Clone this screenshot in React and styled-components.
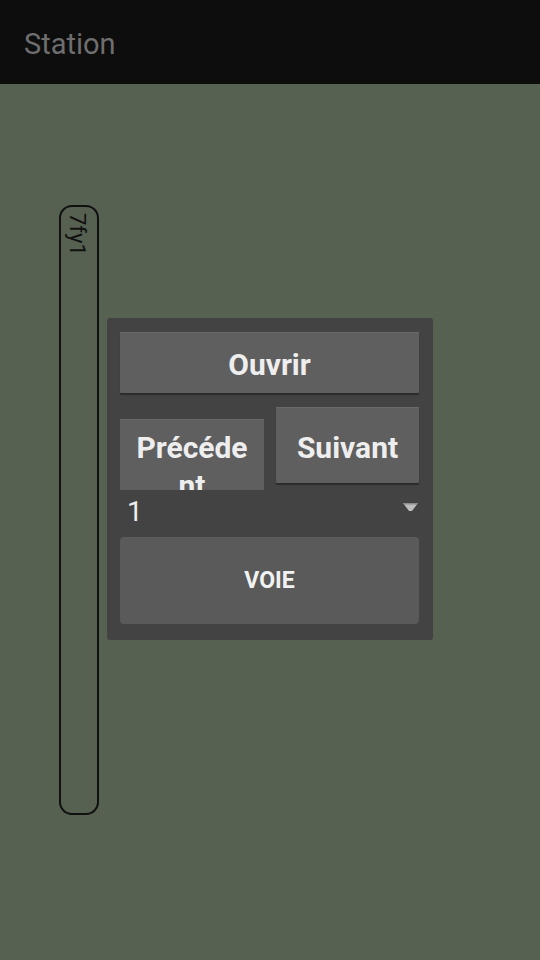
import styled, { createGlobalStyle } from 'styled-components';

const Global = createGlobalStyle`
  html, body {
    margin: 0;
    padding: 0;
    background: #566152;
    font-family: Roboto, "Liberation Sans", sans-serif;
  }
  * { box-sizing: border-box; }
`;

const Screen = styled.div`
  width: 540px;
  height: 960px;
  display: flex;
  flex-direction: column;
  background: #566152;
  overflow: hidden;
`;

const TopBar = styled.header`
  height: 84px;
  flex-shrink: 0;
  background: #0d0d0d;
  display: flex;
  align-items: center;
  padding: 3px 24px 0;
`;

const Title = styled.h1`
  margin: 0;
  font-size: 29px;
  font-weight: 400;
  color: #6e6e6e;
`;

const Canvas = styled.main`
  flex: 1;
  display: flex;
  align-items: flex-start;
  gap: 8px;
  padding-left: 59px;
`;

const Track = styled.div`
  margin-top: 121px;
  width: 40px;
  height: 610px;
  border: 2px solid #111;
  border-radius: 13px;
  display: flex;
  justify-content: center;
  padding-top: 6px;
  padding-right: 5px;
`;

const TrackLabel = styled.span`
  writing-mode: vertical-rl;
  font-size: 22px;
  color: #111;
  line-height: 1;
`;

const Panel = styled.section`
  margin-top: 234px;
  width: 326px;
  background: #434343;
  border-radius: 3px;
  padding: 14px 14px 16px 13px;
  display: flex;
  flex-direction: column;
`;

const Button = styled.button`
  font-family: Roboto, "Liberation Sans", sans-serif;
  font-weight: 700;
  font-size: 30px;
  color: #eeeeee;
  background: #5f5f5f;
  border: none;
  border-top: 1px solid #6a6a6a;
  border-radius: 1px;
  box-shadow: 0 2px 1px rgba(0, 0, 0, 0.35);
  padding: 4px 6px 0;
  height: ${p => p.$h}px;
  width: ${p => p.$w ? `${p.$w}px` : '100%'};
  margin-top: ${p => p.$top || 0}px;
  flex-shrink: 0;
  line-height: 38px;
`;

const WrapButton = styled(Button)`
  overflow: hidden;
  word-break: break-all;
  align-self: flex-start;
  display: block;
  padding: 9px 10px 0;
  text-align: center;
  box-shadow: none;
`;

const Row = styled.div`
  display: flex;
  gap: 12px;
  height: 83px;
  margin-top: 14px;
  align-items: flex-start;
`;

const Spinner = styled.div`
  height: 47px;
  display: flex;
  align-items: center;
  justify-content: space-between;
  padding: 0 0 4px 7px;
  position: relative;
`;

const SpinnerValue = styled.span`
  font-size: 28px;
  color: #eeeeee;
  font-weight: 400;
`;

const Caret = styled.svg`
  position: absolute;
  right: 1px;
  top: 13px;
`;

const VoieButton = styled.button`
  font-family: Roboto, "Liberation Sans", sans-serif;
  font-weight: 700;
  font-size: 23px;
  color: #f2f2f2;
  background: #5a5a5a;
  border: none;
  border-radius: 4px;
  height: 87px;
  width: 100%;
`;

export default function App() {
  return (
    <Screen>
      <Global />
      <TopBar>
        <Title>Station</Title>
      </TopBar>
      <Canvas>
        <Track>
          <TrackLabel>7fy1</TrackLabel>
        </Track>
        <Panel>
          <Button $h={61}>Ouvrir</Button>
          <Row>
            <WrapButton $w={144} $h={71} $top={12}>Précédent</WrapButton>
            <Button $w={143} $h={76}>Suivant</Button>
          </Row>
          <Spinner>
            <SpinnerValue>1</SpinnerValue>
            <Caret width="15" height="10" viewBox="0 0 15 10">
              <path d="M0 0 H15 L9 8 H6 Z" fill="#bdbdbd" />
              <path d="M0 0 H15 L14 1.5 H1 Z" fill="#8a8a8a" />
            </Caret>
          </Spinner>
          <VoieButton>VOIE</VoieButton>
        </Panel>
      </Canvas>
    </Screen>
  );
}
